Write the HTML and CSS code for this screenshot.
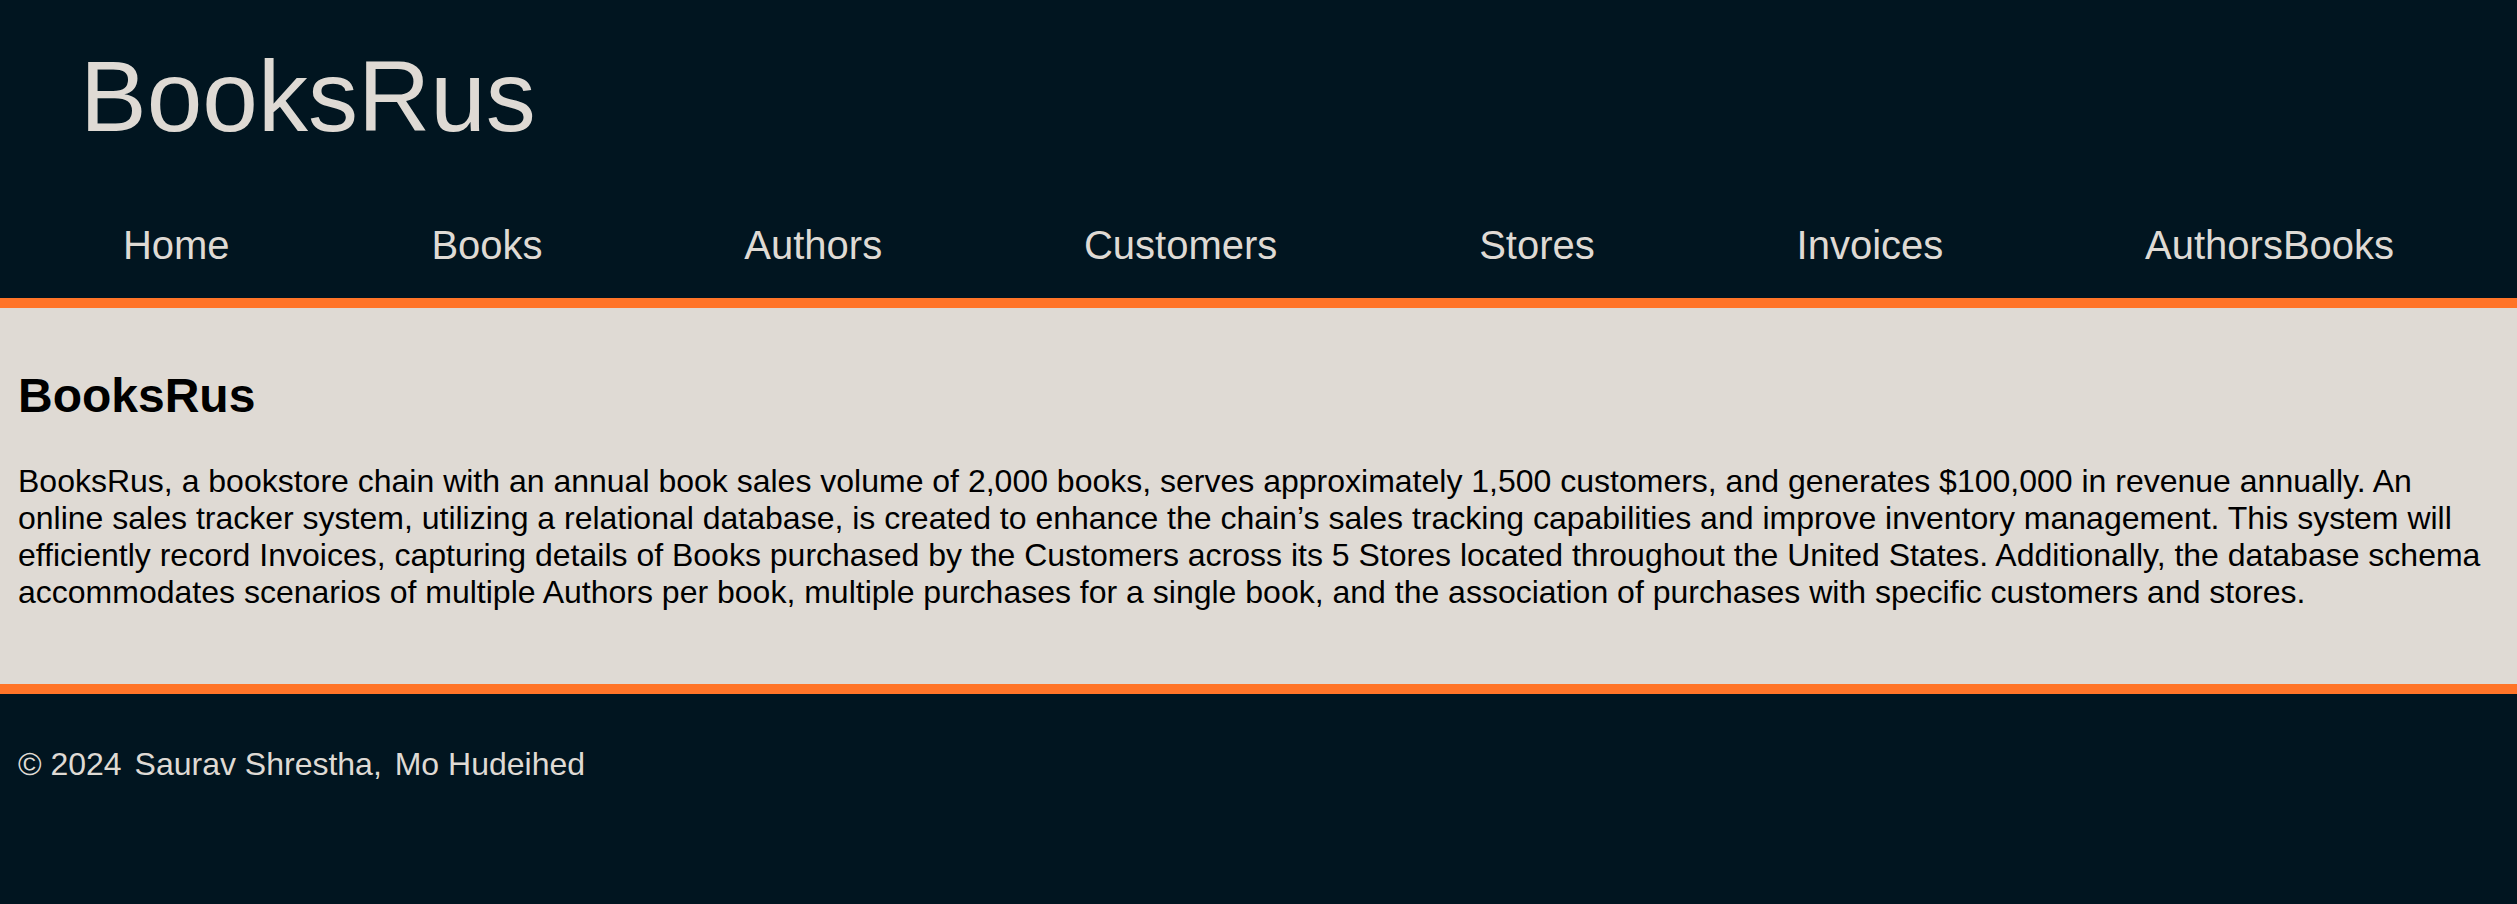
FILE: index.html
```html
<!DOCTYPE html>
<html lang="en">
<head>
<meta charset="utf-8">
<title>BooksRus</title>
<link rel="stylesheet" href="styles.css">
</head>
<body>
<header class="site-header">
  <h1 class="site-title">BooksRus</h1>
  <nav class="site-nav">
    <a class="nav-link" href="#">Home</a>
    <a class="nav-link" href="#">Books</a>
    <a class="nav-link" href="#">Authors</a>
    <a class="nav-link" href="#">Customers</a>
    <a class="nav-link" href="#">Stores</a>
    <a class="nav-link" href="#">Invoices</a>
    <a class="nav-link" href="#">AuthorsBooks</a>
  </nav>
</header>
<main class="content">
  <h2 class="content-title">BooksRus</h2>
  <p class="content-text">BooksRus, a bookstore chain with an annual book sales volume of 2,000 books, serves approximately 1,500 customers, and generates $100,000 in revenue annually. An online sales tracker system, utilizing a relational database, is created to enhance the chain’s sales tracking capabilities and improve inventory management. This system will efficiently record Invoices, capturing details of Books purchased by the Customers across its 5 Stores located throughout the United States. Additionally, the database schema accommodates scenarios of multiple Authors per book, multiple purchases for a single book, and the association of purchases with specific customers and stores.</p>
</main>
<footer class="site-footer">
  <p class="footer-text">© 2024 <span class="author">Saurav Shrestha,</span> <span class="author">Mo Hudeihed</span></p>
</footer>
</body>
</html>
```
FILE: styles.css
```css
html {
  background: #011520;
}

body {
  margin: 0;
  padding: 0;
  background: #011520;
  font-family: "Liberation Sans", Arial, sans-serif;
  color: #000;
}

.site-header {
  background: #011520;
  color: #dfdad4;
  padding: 39px 0 30px;
  border-bottom: 10px solid #ff7428;
}

.site-title {
  margin: 0 0 69px;
  padding: 0 80px;
  font-size: 100px;
  font-weight: normal;
  line-height: normal;
}

.site-nav {
  display: flex;
  justify-content: space-around;
  padding: 0 22px;
}

.nav-link {
  color: #dfdad4;
  text-decoration: none;
  font-size: 40px;
}

.content {
  background: #dfdad4;
  padding: 20px 18px 41px;
}

.content-title {
  margin: 40px 0;
  font-size: 48px;
  font-weight: bold;
}

.content-text {
  margin: 32px 0;
  font-size: 32px;
}

.site-footer {
  background: #011520;
  color: #dfdad4;
  border-top: 10px solid #ff7428;
  padding: 20px 18px;
}

.footer-text {
  margin: 32px 0;
  font-size: 32px;
}

.author {
  margin-left: 4px;
}
```
